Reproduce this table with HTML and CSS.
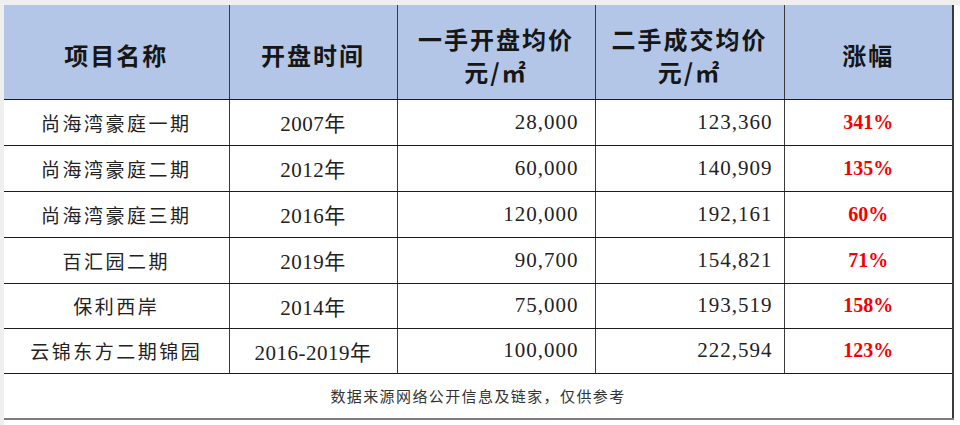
FILE: index.html
```html
<!DOCTYPE html>
<html lang="zh-CN">
<head>
<meta charset="utf-8">
<title>房价涨幅</title>
<link rel="stylesheet" href="styles.css">
</head>
<body>
<div class="sheet">
  <table class="grid">
    <colgroup>
      <col class="c1"><col class="c2"><col class="c3"><col class="c4"><col class="c5">
    </colgroup>
    <thead>
      <tr class="head">
        <th>项目名称</th>
        <th>开盘时间</th>
        <th>一手开盘均价<br>元/㎡</th>
        <th>二手成交均价<br>元/㎡</th>
        <th>涨幅</th>
      </tr>
    </thead>
    <tbody>
      <tr class="r46"><td class="name">尚海湾豪庭一期</td><td class="year">2007年</td><td class="num n1">28,000</td><td class="num n2">123,360</td><td class="pct">341%</td></tr>
      <tr class="r46"><td class="name">尚海湾豪庭二期</td><td class="year">2012年</td><td class="num n1">60,000</td><td class="num n2">140,909</td><td class="pct">135%</td></tr>
      <tr class="r46"><td class="name">尚海湾豪庭三期</td><td class="year">2016年</td><td class="num n1">120,000</td><td class="num n2">192,161</td><td class="pct">60%</td></tr>
      <tr class="r46"><td class="name">百汇园二期</td><td class="year">2019年</td><td class="num n1">90,700</td><td class="num n2">154,821</td><td class="pct">71%</td></tr>
      <tr class="r45"><td class="name">保利西岸</td><td class="year">2014年</td><td class="num n1">75,000</td><td class="num n2">193,519</td><td class="pct">158%</td></tr>
      <tr class="r45"><td class="name">云锦东方二期锦园</td><td class="year">2016-2019年</td><td class="num n1">100,000</td><td class="num n2">222,594</td><td class="pct">123%</td></tr>
      <tr class="foot"><td colspan="5">数据来源网络公开信息及链家，仅供参考</td></tr>
    </tbody>
  </table>
</div>
</body>
</html>
```

FILE: styles.css
```css
html, body {
  margin: 0;
  padding: 0;
  background: #ffffff;
}
.sheet {
  width: 960px;
  height: 425px;
  box-sizing: border-box;
  border-top: 5px solid #efefef;
  border-left: 4px solid #efefef;
  background: #ffffff;
  overflow: hidden;
}
.grid {
  border-collapse: collapse;
  table-layout: fixed;
  width: 949px;
  font-family: "Liberation Serif", "Noto Sans CJK SC", serif;
  color: #1e1e1e;
}
.c1 { width: 225px; }
.c2 { width: 168px; }
.c3 { width: 198px; }
.c4 { width: 189px; }
.c5 { width: 169px; }
.grid td, .grid th {
  padding: 0;
  border-left: 1px solid #3a3a3a;
  border-bottom: 1px solid #1c1c1c;
  text-align: center;
  vertical-align: middle;
  overflow: hidden;
  white-space: nowrap;
}
.grid tr > :first-child { border-left: none; }
.grid tr > :last-child { border-right: 2px solid #3a3a3a; }
.head {
  height: 94px;
}
.head th {
  background: #b4c6e7;
  font-family: "Noto Sans CJK SC", sans-serif;
  font-weight: 700;
  font-size: 24px;
  letter-spacing: 2px;
  line-height: 33px;
  color: #161616;
  padding-top: 6px;
}
.r46 { height: 46px; }
.r45 { height: 45px; }
.name {
  font-family: "Noto Sans CJK SC", sans-serif;
  font-size: 19px;
  letter-spacing: 2.5px;
  color: #222;
}
.year {
  font-size: 21px;
  letter-spacing: 0.5px;
  color: #222;
}
.num {
  text-align: right !important;
  font-size: 21px;
  letter-spacing: 1px;
  color: #222;
}
.n1 { padding-right: 16px !important; }
.n2 { padding-right: 11px !important; }
.pct {
  font-size: 20px;
  font-weight: 700;
  color: #f40000;
}
.foot { height: 46px; }
.foot td {
  font-family: "Noto Sans CJK SC", sans-serif;
  font-size: 15px;
  letter-spacing: 1.4px;
  color: #333;
  border-bottom: 2px solid #7c7c7c;
}
```
